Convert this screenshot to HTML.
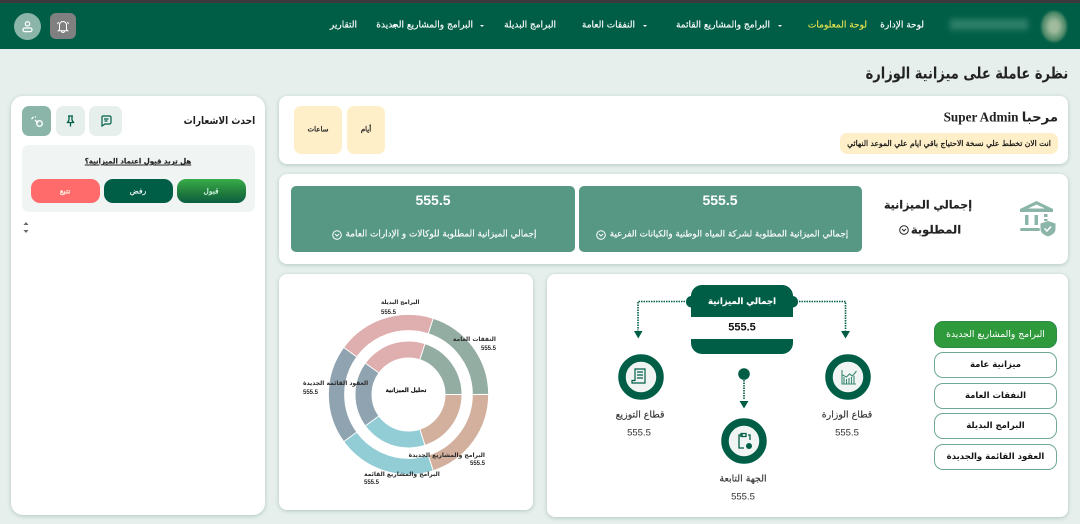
<!DOCTYPE html>
<html lang="ar" dir="rtl"><head><meta charset="utf-8"><title>نظرة عاملة</title>
<style>
*{box-sizing:border-box;margin:0;padding:0}
html,body{width:1080px;height:524px;overflow:hidden;background:#e6efec;font-family:"DejaVu Sans","Liberation Sans",sans-serif;color:#1c1c1c}
.a{position:absolute}
.t{position:absolute;white-space:nowrap;direction:rtl;line-height:1;transform:translateY(-50%)}
.c{position:absolute;white-space:nowrap;direction:rtl;line-height:1;transform:translate(-50%,-50%);text-align:center;-webkit-text-stroke:.15px currentColor}
.n{font-family:"Liberation Sans",sans-serif;-webkit-text-stroke:0}
.card{position:absolute;background:#fff;border-radius:8px;box-shadow:0 1px 4px rgba(60,110,95,.3)}
.nav{font-size:9px;color:#fff;top:26px;-webkit-text-stroke:.15px #fff}
.caret{position:absolute;top:25px;width:0;height:0;border-left:2px solid transparent;border-right:2px solid transparent;border-top:2.5px solid #fff}
.g{position:absolute;background:#579885;border-radius:5px;top:186px;height:66px}
.side{position:absolute;left:934px;width:123px;border:1px solid #6fa898;border-radius:9px;background:#fff;text-align:center;font-size:8.5px;font-weight:bold;direction:rtl;color:#151515}
.lab{font-size:6px;font-weight:bold;color:#2a2a2a}
</style></head><body>
<div class="a" style="left:0;top:0;width:1080px;height:3px;background:#3a3a3a"></div>
<div class="a" style="left:0;top:3px;width:1080px;height:46px;background:#005e47"></div>
<div class="a" style="left:950px;top:19px;width:78px;height:11px;background:#2c7f68;filter:blur(3px)"></div>
<div class="a" style="left:1041px;top:11px;width:26px;height:31px;border-radius:50%;background:radial-gradient(ellipse,#9fba9c 25%,#4f8a69 60%,#0b6a50 100%);filter:blur(1px)"></div>
<div class="a" style="left:14px;top:13px;width:27px;height:27px;border-radius:50%;background:#8bb5a9"></div>
<svg class="a" style="left:21px;top:20px" width="13" height="13" viewBox="0 0 13 13" fill="none" stroke="#fff" stroke-width="1.2"><circle cx="6.5" cy="3.8" r="2.2"/><rect x="2" y="8" width="9" height="3.6" rx="1.6"/></svg>
<div class="a" style="left:50px;top:13px;width:26px;height:26px;border-radius:6px;background:#808080"></div>
<svg class="a" style="left:56px;top:19px" width="14" height="15" viewBox="0 0 14 15" fill="none" stroke="#fff" stroke-width="1"><path d="M3.5 10.5V6a3.5 3.5 0 0 1 7 0v4.5l1.2 1.2H2.3zM5.500 12a1.500 1.500 0 0 0 3 0M1.500 5l1-2M12.500 5l-1-2"/></svg>

<div class="t nav" style="right:156px">لوحة الإدارة</div>
<div class="t nav" style="right:213px;color:#e3e24f;-webkit-text-stroke-color:#e3e24f">لوحة المعلومات</div>
<div class="t nav" style="right:310px">البرامج والمشاريع القائمة</div><div class="caret" style="left:778px"></div>
<div class="t nav" style="right:445px">النفقات العامة</div><div class="caret" style="left:643px"></div>
<div class="t nav" style="right:524px">البرامج البديلة</div><div class="caret" style="left:480px"></div>
<div class="t nav" style="right:607px">البرامج والمشاريع الجديدة</div><div class="caret" style="left:392px"></div>
<div class="t nav" style="right:723px">التقارير</div>

<div class="t" style="right:12px;top:74px;font-size:15.5px;font-weight:bold;color:#222;transform:translateY(-50%) scaleX(.84);transform-origin:right center">نظرة عاملة على ميزانية الوزارة</div>

<!-- left card -->
<div class="card" style="left:11px;top:96px;width:254px;height:419px;border-radius:12px"></div>
<div class="t" style="right:825px;top:121px;font-size:10.5px;font-weight:bold;color:#1f1f1f;transform:translateY(-50%) scaleX(.86);transform-origin:right center">احدث الاشعارات</div>
<div class="a" style="left:22px;top:106px;width:29px;height:30px;border-radius:7px;background:#8bb5a9"></div>
<div class="a" style="left:56px;top:106px;width:29px;height:30px;border-radius:7px;background:#e6efec"></div>
<div class="a" style="left:89px;top:106px;width:33px;height:30px;border-radius:7px;background:#e6efec"></div>
<svg class="a" style="left:30px;top:114px" width="14" height="14" viewBox="0 0 14 14" fill="none" stroke="#fff" stroke-width="1.3"><path d="M1.500 5l2-2M5 2.500l1 .8M5 6l3 3"/><circle cx="9.500" cy="9.500" r="2.800"/></svg>
<svg class="a" style="left:65px;top:115px" width="11" height="12" viewBox="0 0 11 12" fill="none" stroke="#005e47" stroke-width="1.3"><path d="M3 1h5M4 1v4L2.500 7.500h6L7 5V1M5.500 7.500V11.500"/></svg>
<svg class="a" style="left:100px;top:115px" width="12" height="12" viewBox="0 0 12 12" fill="none" stroke="#005e47" stroke-width="1.2"><path d="M2.500 1h7a1.500 1.500 0 0 1 1.500 1.500v5a1.500 1.500 0 0 1-1.500 1.500H5l-3 2V2.500A1.500 1.500 0 0 1 2.500 1z"/><path d="M4 4h4.500M4.500 6h3"/></svg>
<div class="a" style="left:22px;top:145px;width:233px;height:67px;border-radius:7px;background:#f0f5f3"></div>
<div class="c" style="left:138px;top:162px;font-size:7px;font-weight:bold;text-decoration:underline;color:#222">هل تريد قبول اعتماد الميزانية؟</div>
<div class="a" style="left:177px;top:179px;width:69px;height:24px;border-radius:9px;background:linear-gradient(#38ad4a,#1f7a3c 60%,#0a5f44)"></div>
<div class="a" style="left:104px;top:179px;width:69px;height:24px;border-radius:9px;background:#005e47"></div>
<div class="a" style="left:31px;top:179px;width:69px;height:24px;border-radius:9px;background:#ff6b6b"></div>
<div class="c" style="left:211px;top:191px;font-size:7.5px;color:#dfe">قبول</div>
<div class="c" style="left:138px;top:191px;font-size:7.5px;color:#fff">رفض</div>
<div class="c" style="left:65px;top:191px;font-size:7.5px;color:#ffe">تتبع</div>
<svg class="a" style="left:23px;top:222px" width="6" height="11" viewBox="0 0 6 11" fill="#666"><path d="M3 0l2.500 3h-5zM3 11L.5 8h5z"/></svg>

<!-- welcome -->
<div class="card" style="left:279px;top:96px;width:789px;height:68px"></div>
<div class="a" style="left:294px;top:106px;width:48px;height:48px;border-radius:7px;background:#feefc9"></div>
<div class="a" style="left:347px;top:106px;width:38px;height:48px;border-radius:7px;background:#feefc9"></div>
<div class="c" style="left:318px;top:130px;font-size:7px;color:#222;-webkit-text-stroke:.3px #222">ساعات</div>
<div class="c" style="left:366px;top:130px;font-size:7px;color:#222;-webkit-text-stroke:.3px #222">أيام</div>
<div class="t" style="right:22px;top:117px;font-size:13.2px;font-weight:bold;color:#222;font-family:'Liberation Serif','DejaVu Sans',serif">مرحبا Super Admin</div>
<div class="a" style="left:840px;top:133px;width:218px;height:21px;border-radius:7px;background:#feefc9"></div>
<div class="c" style="left:949px;top:144px;font-size:7.6px;color:#111;-webkit-text-stroke:.25px #111">انت الان تخطط علي نسخة الاحتياج باقي ايام علي الموعد النهائي</div>

<!-- totals -->
<div class="card" style="left:279px;top:174px;width:789px;height:90px"></div>
<div class="g" style="left:291px;width:284px"></div>
<div class="g" style="left:579px;width:283px"></div>
<div class="c n" style="left:433px;top:200px;font-size:14px;font-weight:bold;color:#fff">555.5</div>
<div class="c n" style="left:720px;top:200px;font-size:14px;font-weight:bold;color:#fff">555.5</div>
<div class="c" style="left:441px;top:235px;font-size:8.9px;color:#fff">إجمالي الميزانية المطلوبة للوكالات و الإدارات العامة</div>
<div class="c" style="left:729px;top:235px;font-size:8.8px;color:#fff">إجمالي الميزانية المطلوبة لشركة المياه الوطنية والكيانات الفرعية</div>
<svg class="a" style="left:332px;top:230px" width="10" height="10" fill="none" stroke="#fff"><circle cx="5" cy="5" r="4.300"/><path d="M3 4l2 2 2-2"/></svg>
<svg class="a" style="left:596px;top:230px" width="10" height="10" fill="none" stroke="#fff"><circle cx="5" cy="5" r="4.300"/><path d="M3 4l2 2 2-2"/></svg>
<div class="c" style="left:928px;top:205px;font-size:11px;font-weight:bold;color:#222">إجمالي الميزانية</div>
<div class="c" style="left:936px;top:230px;font-size:11.5px;font-weight:bold;color:#222">المطلوبة</div>
<svg class="a" style="left:899px;top:225px" width="10" height="10" fill="none" stroke="#222"><circle cx="5" cy="5" r="4.300"/><path d="M3 4l2 2 2-2"/></svg>
<svg class="a" style="left:1019px;top:199px" width="40" height="38" viewBox="0 0 40 38"><path d="M1 10L17.500 2 34 10v3H1z" fill="#8bb5a9"/><path d="M9 9.500l8.500-4 8.500 4z" fill="#fff"/><path d="M6 16h3.500v10H6zM15.500 16H19v10h-3.500zM25 15h3.500v3H25zM25 20h3.500v2H25z" fill="#8bb5a9"/><rect x="1" y="29" width="20" height="3" rx="1.500" fill="#8bb5a9"/><path d="M29 22l7.500 2.500v5.500c0 4-3.500 6-7.500 7.500-4-1.500-7.500-3.500-7.500-7.500v-5.500z" fill="#8bb5a9"/><path d="M25.500 29.500l2.500 2.500 4-4.500" fill="none" stroke="#fff" stroke-width="1.500"/></svg>

<!-- chart -->
<div class="card" style="left:279px;top:274px;width:254px;height:236px"></div>
<svg class="a" style="left:320px;top:305px" width="180" height="180" viewBox="-90 -90 180 180" fill="none">
<g stroke-width="15.3" transform="translate(-1.500,-0.500)">
<circle r="72" pathLength="100" stroke="#d2b09d" stroke-dasharray="20 80" stroke-dashoffset="0"/>
<circle r="72" pathLength="100" stroke="#92cdd6" stroke-dasharray="20 80" stroke-dashoffset="-20"/>
<circle r="72" pathLength="100" stroke="#8fa3b0" stroke-dasharray="20 80" stroke-dashoffset="-40"/>
<circle r="72" pathLength="100" stroke="#dfaeae" stroke-dasharray="20 80" stroke-dashoffset="-60"/>
<circle r="72" pathLength="100" stroke="#93ada3" stroke-dasharray="20 80" stroke-dashoffset="-80"/>
</g>
<g stroke-width="16" transform="translate(-1.500,-0.500)">
<circle r="45" pathLength="100" stroke="#d2b09d" stroke-dasharray="20 80" stroke-dashoffset="0"/>
<circle r="45" pathLength="100" stroke="#92cdd6" stroke-dasharray="20 80" stroke-dashoffset="-20"/>
<circle r="45" pathLength="100" stroke="#8fa3b0" stroke-dasharray="20 80" stroke-dashoffset="-40"/>
<circle r="45" pathLength="100" stroke="#dfaeae" stroke-dasharray="20 80" stroke-dashoffset="-60"/>
<circle r="45" pathLength="100" stroke="#93ada3" stroke-dasharray="20 80" stroke-dashoffset="-80"/>
</g>
<g stroke="#fff" stroke-width="1" transform="translate(-1.500,-0.500)">
<path d="M36 0h45M11.100 34.200L25 77M-29.100 21.100L-65.500 47.600M-29.100 -21.100L-65.500 -47.600M11.100 -34.200L25 -77"/>
</g>
</svg>
<div class="c lab" style="left:406px;top:392px;color:#111;font-size:5.6px">تحليل الميزانية</div>
<div class="t lab" style="left:381px;top:304px;font-size:5.6px">البرامج البديلة</div><div class="t lab n" style="left:381px;top:313px">555.5</div>
<div class="t lab" style="right:584px;top:340px">النفقات العامة</div><div class="t lab n" style="right:584px;top:349px">555.5</div>
<div class="t lab" style="left:303px;top:384px">العقود القائمة الجديدة</div><div class="t lab n" style="left:303px;top:393px">555.5</div>
<div class="t lab" style="right:595px;top:456px">البرامج والمشاريع الجديدة</div><div class="t lab n" style="right:595px;top:464px">555.5</div>
<div class="t lab" style="left:364px;top:475px">البرامج والمشاريع القائمة</div><div class="t lab n" style="left:364px;top:483px">555.5</div>

<!-- diagram -->
<div class="card" style="left:547px;top:274px;width:521px;height:243px"></div>
<svg class="a" style="left:547px;top:274px" width="521" height="243" viewBox="547 274 521 243" fill="none">
<path d="M691 317v-9.500a5.500 5.500 0 0 1-5-6 5.500 5.500 0 0 1 5-5.500v-1a11 11 0 0 1 11-10h80a11 11 0 0 1 11 10v1a5.500 5.500 0 0 1 5 5.500 5.500 5.500 0 0 1-5 6v9.500z" fill="#005e47"/>
<path d="M691 339h102v4a11 11 0 0 1-11 11h-80a11 11 0 0 1-11-11z" fill="#005e47"/>
<path d="M685 301.500h-47v29M799 301.500h46.500v29M744 380v20" stroke="#005e47" stroke-width="1.600" stroke-dasharray="1.500 1"/>
<path d="M634 331h8.500l-4.250 7.500zM841 331h9l-4.500 7.500zM739.500 401h9l-4.500 7.500z" fill="#005e47"/>
<circle cx="744" cy="374" r="5.800" fill="#005e47"/>
<g fill="#f0f5f3" stroke="#005e47" stroke-width="7.500">
<circle cx="641" cy="377" r="19"/><circle cx="848" cy="377" r="19"/><circle cx="744" cy="441" r="19"/>
</g>
<path d="M635 369h10v14h-13v-2.500h3zM637 372h6M637 375h6M637 378h6" stroke="#005e47" stroke-width="1.200"/>
<path d="M842 370v14h14M844 384v-7M846.500 384v-5M849 384v-6M851.500 384v-7M854 384v-8M842.500 375l4 2 3-3 3 2 4-5" stroke="#3e8a74" stroke-width="1.100"/>
<path d="M743 435h-4v13h5M748 435h2v5M741 433.500h5v3h-5z" stroke="#005e47" stroke-width="1.300"/>
<circle cx="749" cy="446" r="3" fill="#005e47"/>
</svg>
<div class="c" style="left:742px;top:302px;font-size:8.5px;font-weight:bold;color:#fff">اجمالي الميزانية</div>
<div class="c n" style="left:742px;top:328px;font-size:11px;font-weight:bold;color:#111">555.5</div>
<div class="c" style="left:640px;top:415px;font-size:9.4px;color:#333">قطاع التوزيع</div>
<div class="c n" style="left:639px;top:433px;font-size:9.5px;color:#333">555.5</div>
<div class="c" style="left:847px;top:415px;font-size:9.4px;color:#333">قطاع الوزارة</div>
<div class="c n" style="left:847px;top:433px;font-size:9.5px;color:#333">555.5</div>
<div class="c" style="left:743px;top:479px;font-size:9.4px;color:#333">الجهة التابعة</div>
<div class="c n" style="left:743px;top:497px;font-size:9.5px;color:#333">555.5</div>

<div class="side" style="top:321px;height:27px;line-height:25px;background:#2f9a3c;border-color:#2a8a46;color:#fff;font-weight:normal;font-size:9.2px">البرامج والمشاريع الجديدة</div>
<div class="side" style="top:352px;height:26px;line-height:24px">ميزانية عامة</div>
<div class="side" style="top:383px;height:26px;line-height:24px">النفقات العامة</div>
<div class="side" style="top:413px;height:26px;line-height:24px">البرامج البديلة</div>
<div class="side" style="top:444px;height:26px;line-height:24px">العقود القائمة والجديدة</div>
</body></html>
